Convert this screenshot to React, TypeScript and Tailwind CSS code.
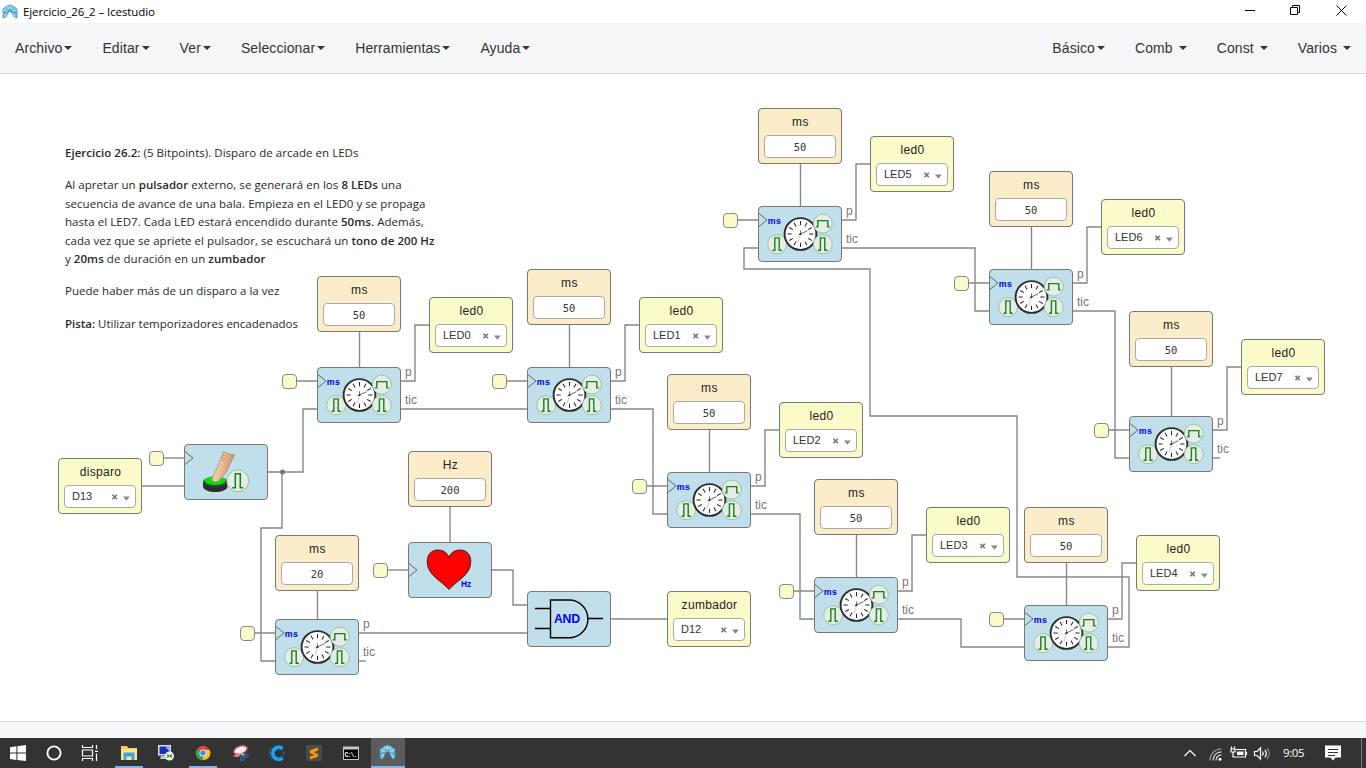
import React from "react";

type Point = { x: number; y: number };

const LEFT_MENU = ["Archivo", "Editar", "Ver", "Seleccionar", "Herramientas", "Ayuda"];
const RIGHT_MENU = ["Básico", "Comb ", "Const ", "Varios "];

const TIMERS: (Point & { constY: number; value: string; led?: string; ledRise?: number })[] = [
  { x: 317, y: 367, constY: 276, value: "50", led: "LED0" },
  { x: 527, y: 367, constY: 269, value: "50", led: "LED1" },
  { x: 667, y: 472, constY: 374, value: "50", led: "LED2" },
  { x: 814, y: 577, constY: 479, value: "50", led: "LED3" },
  { x: 1024, y: 605, constY: 507, value: "50", led: "LED4" },
  { x: 758, y: 206, constY: 108, value: "50", led: "LED5" },
  { x: 989, y: 269, constY: 171, value: "50", led: "LED6" },
  { x: 1129, y: 416, constY: 311, value: "50", led: "LED7", ledRise: 77 },
  { x: 275, y: 619, constY: 535, value: "20" },
];

const WIRES = [
  "M401 409H527",
  "M611 409H653V514H667",
  "M751 514H800V619H814",
  "M898 619H961V647H1024",
  "M1108 647H1129V577H1017V416H870V269H744V248H758",
  "M842 248H975V311H989",
  "M1073 311H1115V458H1129",
  "M1213 458H1220",
  "M359 661H366",
  "M359 633H527",
  "M142 486H184",
  "M268 472H303V409H317",
  "M282 472V528H261V661H275",
  "M450 507V542",
  "M492 570H513V605H527",
  "M611 619H667",
  "M163 458H184",
  "M387 570H408",
];

function Caret() {
  return <span className="ml-[2px] inline-block border-x-4 border-t-4 border-x-transparent border-t-[#333]" />;
}

function MenuItem({ label }: { label: string }) {
  return (
    <div className="flex items-center px-[15px] whitespace-pre">
      {label}
      <Caret />
    </div>
  );
}

function IceLogo({ className }: { className: string }) {
  return (
    <svg viewBox="0 0 16 16" className={className}>
      <path d="M1 5 5 2 8 1l3 1 4 3v9l-3-1-2-4-2-2-2 2-2 4-3 1z" fill="#6fc6e6" stroke="#3187a6" strokeWidth=".7" />
      <path d="M1 5l5 3M15 5l-5 3M5 2l3 5 3-5M3 14l2-7M13 14l-2-7M8 1v6" stroke="#d3f3fc" strokeWidth=".5" fill="none" />
      <path d="M6 8l2-3 2 3M2 9l4-1M14 9l-4-1" stroke="#28708c" strokeWidth=".7" fill="none" />
    </svg>
  );
}

function TitleBar() {
  return (
    <div className="flex h-[23px] items-center justify-between bg-white">
      <div className="flex items-center pl-[2px] font-['Open_Sans','Noto_Sans',sans-serif] text-[11.5px] tracking-[-0.1px] text-black">
        <IceLogo className="mr-[5px] h-4 w-4" />
        Ejercicio_26_2 – Icestudio
      </div>
      <svg className="h-[23px] w-[126px]" fill="none" stroke="#000" strokeWidth="1">
        <path d="M5 10.5H15M50.5 7.5h7v7h-7zM52.5 7.5v-2h7v7h-2M96.5 5.5l10 10M106.5 5.5l-10 10" />
      </svg>
    </div>
  );
}

function NavBar() {
  return (
    <div className="flex h-[51px] items-stretch justify-between border-b border-[#d5d8dc] bg-[#f4f6f8] text-[14px] tracking-[0.1px] text-[#333]">
      <div className="flex">
        {LEFT_MENU.map((m) => (
          <MenuItem key={m} label={m} />
        ))}
      </div>
      <div className="flex">
        {RIGHT_MENU.map((m) => (
          <MenuItem key={m} label={m} />
        ))}
      </div>
    </div>
  );
}

function ConstBlock({ x, y, label, value }: Point & { label: string; value: string }) {
  return (
    <div
      className="absolute flex h-14 w-[84px] flex-col items-center rounded-[4px] border border-[#777] bg-[#fbedc9]"
      style={{ left: x, top: y }}
    >
      <div className="h-[26px] pl-px text-[12px] leading-[26px] tracking-[0.5px] text-[#222]">{label}</div>
      <div className="flex h-[23px] w-[72px] items-center justify-center rounded-[4px] border border-[#aaa] bg-white pt-[2px] font-['DejaVu_Sans_Mono',monospace] text-[10.5px] text-[#333]">
        {value}
      </div>
    </div>
  );
}

function PinBlock({ x, y, label, pin }: Point & { label: string; pin: string }) {
  return (
    <div
      className="absolute flex h-14 w-[84px] flex-col items-center rounded-[4px] border border-[#777] bg-[#fbfac9]"
      style={{ left: x, top: y }}
    >
      <div className="h-[26px] pl-px text-[12px] leading-[26px] tracking-[0.3px] text-[#222]">{label}</div>
      <div className="flex h-[23px] w-[72px] items-center rounded-[4px] border border-[#aaa] bg-white pr-[5px] pl-[7px] text-[11px] text-[#333]">
        <span className="flex-1">{pin}</span>
        <svg className="h-2 w-[18px]" viewBox="0 0 18 8">
          <path d="M.5 1.8l4.4 4.4M4.9 1.8.5 6.2" stroke="#777" strokeWidth="1.6" />
          <path d="M11 3.5h6.8l-3.4 4.3z" fill="#888" />
        </svg>
      </div>
    </div>
  );
}

function Pulse({ cx, cy, wide }: { cx: number; cy: number; wide?: boolean }) {
  return (
    <g transform={`translate(${cx} ${cy})`}>
      <circle r="9.5" fill="#e9ebe9" stroke="#8fc29a" strokeWidth=".9" />
      <path
        d={wide ? "M-7 3.3h2v-6.3H5v6.3h2" : "M-4.8 6h2.4V-6.3H2V6h2.6"}
        fill="none"
        stroke="#148514"
        strokeWidth="1.4"
      />
    </g>
  );
}

function ClockNotch({ y }: { y: number }) {
  return <path d={`M1 ${y - 6.5} 9 ${y}l-8 6.5`} fill="none" stroke="#666" strokeWidth="1" />;
}

function BlockShell({ x, y, children }: Point & { children: React.ReactNode }) {
  return (
    <div
      className="absolute h-14 w-[84px] rounded-[4px] border border-[#777] bg-[#c0dfeb]"
      style={{ left: x, top: y }}
    >
      <svg className="-m-px h-14 w-[84px] overflow-visible" viewBox="0 0 84 56">
        {children}
      </svg>
    </div>
  );
}

function TimerBlock({ x, y }: Point) {
  return (
    <BlockShell x={x} y={y}>
      <ClockNotch y={14} />
      <text x="9.8" y="18" fontSize="8.8" fontWeight="bold" fill="#0000f5" textLength="13.2" fontFamily="'Liberation Sans', sans-serif">
        ms
      </text>
      <Pulse cx={19.2} cy={38.2} />
      <circle cx="42.5" cy="28" r="15.9" fill="#fff" stroke="#2b2d2e" strokeWidth="1.9" />
      <g stroke="#222" strokeWidth="1">
        {[0, 30, 60, 90, 120, 150, 180, 210, 240, 270, 300, 330].map((a) => (
          <path key={a} d="M42.5 15v4.2" transform={`rotate(${a} 42.5 28)`} />
        ))}
      </g>
      <path d="M40.5 29 49.5 24.6M42.5 24.5V29" stroke="#444" strokeWidth=".8" />
      <path d="M43.3 26 40 36.5" stroke="#f3a3ab" strokeWidth=".8" />
      <circle cx="42.5" cy="28" r="1.1" fill="#422" />
      <Pulse cx={64.8} cy={17.6} wide />
      <Pulse cx={64.8} cy={38.2} />
    </BlockShell>
  );
}

function ButtonBlock({ x, y }: Point) {
  return (
    <BlockShell x={x} y={y}>
      <defs>
        <linearGradient id="skin" x1="0" x2="1" y1="0" y2=".3">
          <stop offset="0" stopColor="#f8d7b8" />
          <stop offset=".5" stopColor="#edc09a" />
          <stop offset="1" stopColor="#c98f68" />
        </linearGradient>
      </defs>
      <ClockNotch y={14} />
      <path d="M19 37.5v4.5c0 8 24.5 8 24.5 0v-4.5z" fill="#2c2e2e" />
      <ellipse cx="31.2" cy="38" rx="12.2" ry="5.4" fill="#3c3f3f" />
      <ellipse cx="31" cy="36.7" rx="10.6" ry="4.2" fill="#00e400" />
      <path d="M39.5 7.8c3.5 1.8 7 2.8 11 3L42 28.5l-6.5 7.5c-2.4 3.2-8 2.4-7.7-1L33.5 23z" fill="url(#skin)" stroke="#a87858" strokeWidth=".6" />
      <path d="M38.5 11l3.5 1M37.7 13.5l3.5 1M36.7 16l3.5 1" stroke="#a8764f" strokeWidth=".6" />
      <g transform="translate(-.7 -1.2)">
        <circle cx="54.5" cy="38" r="11" fill="#e7ece8" stroke="#8fc29a" strokeWidth="1" />
        <path d="M49 45h3V31h5v14h3" fill="none" stroke="#148514" strokeWidth="1.5" />
      </g>
    </BlockShell>
  );
}

function HeartBlock({ x, y }: Point) {
  return (
    <BlockShell x={x} y={y}>
      <ClockNotch y={28} />
      <path
        d="M41 47.5C34 39 19.2 33.5 19.2 19.5 19.2 11.5 24.5 8 30 8c5.5 0 9.6 3 11 7.5C42.4 11 46.5 8 52 8c5.5 0 10.8 3.5 10.8 11.5C62.8 33.5 48 39 41 47.5z"
        fill="#f00"
        stroke="#222"
        strokeWidth=".9"
      />
      <text x="53" y="44.5" fontSize="8.3" fontWeight="bold" fill="#0000f5" fontFamily="'Liberation Sans', sans-serif">
        Hz
      </text>
    </BlockShell>
  );
}

function AndBlock({ x, y }: Point) {
  return (
    <BlockShell x={x} y={y}>
      <path
        d="M8 17.5H23.5M8 37.5H23.5M61 27.5H76M23.5 9H42A18.8 18.8 0 0 1 42 46.8H23.5z"
        fill="none"
        stroke="#000"
        strokeWidth="1.4"
      />
      <text x="27" y="32" fontSize="12.2" fontWeight="bold" fill="#0000f5" textLength="26" fontFamily="'Liberation Sans', sans-serif">
        AND
      </text>
    </BlockShell>
  );
}

function Socket({ x, y }: Point) {
  return (
    <div
      className="absolute h-[15px] w-[15px] rounded-[4px] border border-[#888] bg-[#fbfac9]"
      style={{ left: x, top: y }}
    />
  );
}

function PortLabel({ x, y, text }: Point & { text: string }) {
  return (
    <div className="absolute text-[12px] leading-[14px] text-[#777]" style={{ left: x, top: y }}>
      {text}
    </div>
  );
}

function Description() {
  return (
    <div className="absolute top-[144px] left-[65px] font-['Open_Sans','Noto_Sans',sans-serif] text-[11.5px] leading-[18.4px] whitespace-nowrap text-[#24292e] [&_b]:font-semibold">
      <p className="mb-[14px] tracking-[0.03px]">
        <b>Ejercicio 26.2:</b> (5 Bitpoints). Disparo de arcade en LEDs
      </p>
      <p className="mb-[14px] tracking-[0.05px]">
        Al apretar un <b>pulsador</b> externo, se generará en los <b>8 LEDs</b> una
        <br />
        secuencia de avance de una bala. Empieza en el LED0 y se propaga
        <br />
        hasta el LED7. Cada LED estará encendido durante <b>50ms.</b> Además,
        <br />
        cada vez que se apriete el pulsador, se escuchará un <b>tono de 200 Hz</b>
        <br />y <b>20ms</b> de duración en un <b>zumbador</b>
      </p>
      <p className="mb-[14px] tracking-[0.03px]">Puede haber más de un disparo a la vez</p>
      <p className="tracking-[-0.02px]">
        <b>Pista:</b> Utilizar temporizadores encadenados
      </p>
    </div>
  );
}

function Canvas() {
  return (
    <div className="relative h-[647px] overflow-hidden bg-white">
      <div className="absolute -top-[74px] left-0 h-[768px] w-[1366px]">
        <Description />
        <svg className="absolute inset-0 h-[768px] w-[1366px]" fill="none" stroke="#888" strokeWidth="1.4">
          {WIRES.map((d) => (
            <path key={d} d={d} />
          ))}
          {TIMERS.map((t) => (
            <path
              key={`${t.x}-${t.y}`}
              d={
                `M${t.x - 21} ${t.y + 14}h21M${t.x + 42.5} ${t.constY + 56}V${t.y}` +
                (t.led ? `M${t.x + 84} ${t.y + 14}h14v${14 - (t.ledRise ?? 70)}h14` : "")
              }
            />
          ))}
          <circle cx="282.5" cy="472" r="2.5" fill="#777" stroke="none" />
        </svg>
        {TIMERS.map((t) => (
          <React.Fragment key={`${t.x}-${t.y}`}>
            <ConstBlock x={t.x} y={t.constY} label="ms" value={t.value} />
            <Socket x={t.x - 35} y={t.y + 7} />
            <TimerBlock x={t.x} y={t.y} />
            <PortLabel x={t.x + 88} y={t.y - 2} text="p" />
            <PortLabel x={t.x + 88} y={t.y + 26} text="tic" />
            {t.led && <PinBlock x={t.x + 112} y={t.y - (t.ledRise ?? 70)} label="led0" pin={t.led} />}
          </React.Fragment>
        ))}
        <PinBlock x={58} y={458} label="disparo" pin="D13" />
        <Socket x={149} y={451} />
        <ButtonBlock x={184} y={444} />
        <ConstBlock x={408} y={451} label="Hz" value="200" />
        <Socket x={373} y={563} />
        <HeartBlock x={408} y={542} />
        <AndBlock x={527} y={591} />
        <PinBlock x={667} y={591} label="zumbador" pin="D12" />
      </div>
    </div>
  );
}

const TASK_ICONS: { id: string; art: React.ReactNode; state?: "open" | "active" }[] = [
  {
    id: "start",
    art: <path d="M1 3.3 7.4 2.3V8.6H1zM8.4 2.2 17 1V8.6H8.4zM1 9.6H7.4V15.9L1 14.9zM8.4 9.6H17V17L8.4 16z" fill="#fff" />,
  },
  { id: "cortana", art: <circle cx="9" cy="9" r="6.6" fill="none" stroke="#fff" strokeWidth="1.9" /> },
  {
    id: "taskview",
    art: (
      <path d="M1.5 1v2.5h10V1M1.5 17v-2.5h10V17M1.5 6h10v6h-10zM15.5 1v4M15.5 9.5V17M14 7.3h3" fill="none" stroke="#fff" strokeWidth="1.2" />
    ),
  },
  {
    id: "explorer",
    state: "open",
    art: (
      <>
        <path d="M1 2h6l1.5 2H17v12H1z" fill="#f6c94f" />
        <path d="M1 5h16v11H1z" fill="#ffe591" />
        <path d="M3.5 8.5h11V16h-3v-3.500h-5V16h-3z" fill="#3aa7e5" />
      </>
    ),
  },
  {
    id: "remote",
    art: (
      <>
        <path d="M1 1h13v10.500H1z" fill="#dfe3e6" />
        <path d="M2.500 2.500h10v7.500h-10z" fill="#1431c4" />
        <path d="M8 2.5h4.5v5z" fill="#94b6ef" />
        <path d="M4 12h8l1 3H3z" fill="#bfc4c8" />
        <circle cx="12.5" cy="12" r="4.5" fill="#f0f2ee" />
        <path d="M10 10.5l2 1.5-2 1.5M15 10.5 13 12l2 1.5" fill="none" stroke="#2b8d2b" strokeWidth="1.2" />
      </>
    ),
  },
  {
    id: "chrome",
    state: "open",
    art: (
      <>
        <circle cx="9" cy="9" r="7.2" fill="#e94335" />
        <path d="M9 9 2.765 5.4A7.2 7.2 0 0 0 9 16.2z" fill="#34a853" />
        <path d="M9 9V16.2A7.2 7.2 0 0 0 15.7 6H9z" fill="#fbc116" />
        <circle cx="9" cy="9" r="3.5" fill="#fff" />
        <circle cx="9" cy="9" r="2.7" fill="#4285f4" />
      </>
    ),
  },
  {
    id: "snip",
    art: (
      <>
        <ellipse cx="9.5" cy="6" rx="7" ry="4" transform="rotate(-20 9.5 6)" fill="#f5f5f5" stroke="#c9403e" strokeWidth="1.5" />
        <path d="M2 12c3 2 6 1 8-1l-3-2z" fill="#e77a78" />
        <path d="M7 9l7 2M10 6l2 6" stroke="#ccc" strokeWidth="1" />
        <circle cx="11.5" cy="14.5" r="1.9" fill="none" stroke="#2c6cae" strokeWidth="1.3" />
        <circle cx="15.5" cy="11.5" r="1.7" fill="none" stroke="#2c6cae" strokeWidth="1.3" />
      </>
    ),
  },
  {
    id: "cura",
    art: (
      <>
        <circle cx="8.5" cy="9" r="7" fill="none" stroke="#1573a8" strokeWidth="1.6" strokeDasharray="1.5 1.5" />
        <path d="M14.5 4.5A6 6 0 1 0 14.5 14" fill="none" stroke="#19a3f0" strokeWidth="3.8" />
      </>
    ),
  },
  {
    id: "sublime",
    art: (
      <>
        <rect x="1" y="1" width="16" height="16" rx="1.5" fill="#4b4b4b" />
        <path d="M13 3.5v3l-4.5 1.8L13 10v2.8L5 15.5v-3L9.5 11 5 9.2V6.3z" fill="#ff9800" />
      </>
    ),
  },
  {
    id: "console",
    art: (
      <>
        <path d="M1.5 3.5h15v12h-15z" fill="#000" stroke="#c5c8ca" />
        <path d="M1 2.5h16v3H1z" fill="#c5c8ca" />
        <text x="2.5" y="13" fontSize="6.5" fontWeight="bold" fill="#fff" fontFamily="'Liberation Mono', monospace" textLength="13">
          C:\.
        </text>
      </>
    ),
  },
  { id: "icestudio", state: "active", art: null },
];

function Taskbar() {
  return (
    <div className="flex h-[30px] justify-between bg-[#333333]">
      <div className="flex">
        {TASK_ICONS.map((icon, i) => (
          <div
            key={icon.id}
            className={i < 2 ? "flex w-9 justify-center" : i === 2 ? "mr-[2px] flex w-9 justify-center" : "flex w-[37px] justify-center"}
          >
            <div
              className={
                icon.state === "active"
                  ? "flex h-[30px] w-[34px] flex-col items-center border-b-2 border-[#76b9ed] bg-[#5c5c5c] pt-[6px]"
                  : icon.state === "open"
                    ? "flex h-[30px] w-[28px] flex-col items-center border-b-2 border-[#76b9ed] pt-[6px]"
                    : "flex h-[30px] w-[28px] flex-col items-center pt-[6px]"
              }
            >
              {icon.id === "icestudio" ? (
                <IceLogo className="h-[17px] w-[17px]" />
              ) : (
                <svg className="h-[18px] w-[18px]" viewBox="0 0 18 18">
                  {icon.art}
                </svg>
              )}
            </div>
          </div>
        ))}
      </div>
      <div className="flex items-center font-['Open_Sans','Noto_Sans',sans-serif] text-[11.5px] text-white">
        <svg className="mr-[12px] h-[18px] w-[88px]" viewBox="0 0 88 18" fill="none" stroke="#fff" strokeWidth="1.2">
          <path d="M1.5 12 7 6.5 12.5 12" />
          <path d="M38.5 4.8A11.5 11.5 0 0 0 27 16.5" stroke="#999" />
          <path d="M38.5 7.8A8.5 8.5 0 0 0 30 16.5M38.5 10.8A5.5 5.5 0 0 0 33 16.5" stroke="#ddd" />
          <circle cx="37" cy="15.3" r="1.5" fill="#fff" stroke="none" />
          <path d="M53 5.5h9.5v7.5H52M63.500 8v3M48.500 2.500v2.500M51.500 2.500v2.500M48 5h4v3h-4zM50 8v5h2" />
          <path d="M54 7.5h6.500v3.500H54z" fill="#fff" stroke="none" />
          <path d="M71.5 7.5h2.5L77.5 4v11L74 11.5h-2.5z" />
          <path d="M79.5 7.5c1 1.5 1 2.7 0 4M81.8 5.8c2 2.5 2 5 0 7.500" />
          <path d="M84 4c3 3.5 3 7.5 0 11" stroke="#888" />
        </svg>
        <span className="w-[22px] tracking-[-0.4px]">9:05</span>
        <svg className="mr-[19px] ml-[20px] h-[18px] w-[17px]" viewBox="0 0 17 18">
          <path d="M0 1.500h16v12h-5.500L8 16.500 5.500 13.500H0z" fill="#fff" />
          <path d="M3 5.5h10M3 8.5h10M3 11.5h7" stroke="#333" />
        </svg>
        <div className="mr-[4px] h-[30px] w-px bg-[#777]" />
      </div>
    </div>
  );
}

export default function App() {
  return (
    <div className="flex h-[768px] w-[1366px] flex-col overflow-hidden bg-white font-['Liberation_Sans',Arial,sans-serif]">
      <TitleBar />
      <NavBar />
      <Canvas />
      <div className="h-[17px] border-t border-[#d5d8dc] bg-[#f4f6f8]" />
      <Taskbar />
    </div>
  );
}
